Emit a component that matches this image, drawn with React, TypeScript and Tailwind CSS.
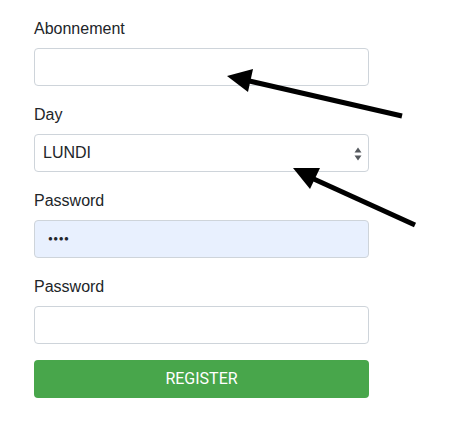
import React from 'react';

const Field: React.FC<{ label: string; children: React.ReactNode }> = ({ label, children }) => (
  <div className="mb-4">
    <label className="block mb-2 h-6 pt-px leading-6 text-base text-[#212529]">{label}</label>
    {children}
  </div>
);

const inputCls =
  'block w-[335px] h-[38px] rounded-[4px] border border-[#ced4da] bg-white px-3 text-base text-[#495057] outline-none';

export default function App() {
  return (
    <div className="relative w-[456px] h-[443px] bg-white font-['Liberation_Sans',Arial,sans-serif]">
      <form className="pt-4 pl-[34px]">
        <Field label="Abonnement">
          <input type="text" className={inputCls} />
        </Field>

        <Field label="Day">
          <div className="relative w-[335px] h-[38px] rounded-[4px] border border-[#ced4da] bg-white">
            <span className="absolute left-[8px] top-0 leading-[36px] text-base text-[#212529]">LUNDI</span>
            <svg className="absolute right-[6px] top-[12px]" width="8" height="14" viewBox="0 0 8 14">
              <path d="M4 0.5 L7.5 5.5 L0.5 5.5 Z" fill="#55595e" />
              <path d="M4 13.5 L7.5 8.5 L0.5 8.5 Z" fill="#55595e" />
            </svg>
          </div>
        </Field>

        <Field label="Password">
          <div className="relative w-[335px] h-[38px] rounded-[4px] border border-[#ced4da] bg-[#e8f0fe]">
            <span className="absolute left-[13px] top-[12px] text-[8px] tracking-[0.5px] text-[#212529]">●●●●</span>
          </div>
        </Field>

        <Field label="Password">
          <input type="password" className={inputCls} />
        </Field>

        <button
          type="button"
          className="block w-[335px] h-[38px] mt-px rounded-[4px] bg-[#48a64b] text-white text-base font-['Roboto',sans-serif]"
        >
          REGISTER
        </button>
      </form>

      {/* annotation arrows */}
      <svg className="absolute left-0 top-0 pointer-events-none" width="456" height="443">
        <line x1="402" y1="116" x2="245" y2="80" stroke="#000" strokeWidth="5" />
        <polygon points="227,76 253,69 248,92" fill="#000" />
        <line x1="415" y1="225" x2="305" y2="175" stroke="#000" strokeWidth="5" />
        <polygon points="293,168 320,168 310,189" fill="#000" />
      </svg>
    </div>
  );
}
